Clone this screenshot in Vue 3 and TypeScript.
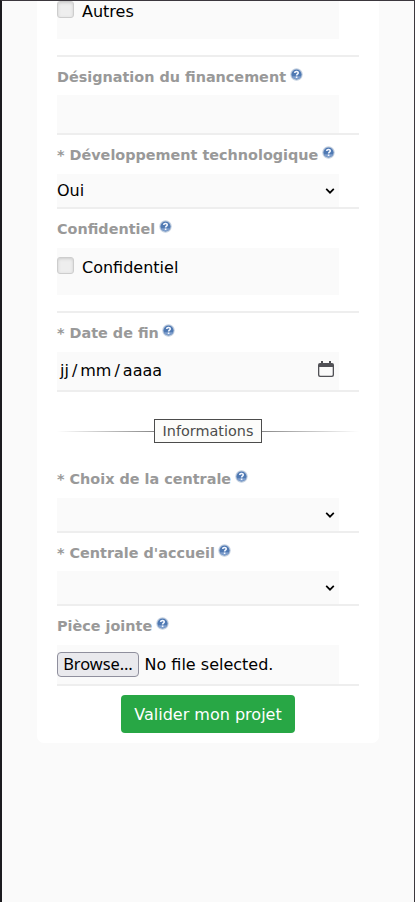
<script setup lang="ts">
interface Field {
  label: string
  kind: 'text' | 'select' | 'check' | 'date' | 'file'
  value?: string
  short?: boolean
}

const projectFields: Field[] = [
  { label: 'Désignation du financement', kind: 'text', short: true },
  { label: '* Développement technologique', kind: 'select', value: 'Oui' },
  { label: 'Confidentiel', kind: 'check', value: 'Confidentiel' },
  { label: '* Date de fin', kind: 'date' },
]

const infoFields: Field[] = [
  { label: '* Choix de la centrale', kind: 'select' },
  { label: "* Centrale d'accueil", kind: 'select', short: true },
  { label: 'Pièce jointe', kind: 'file' },
]

const groups = [
  { id: 'project', fields: projectFields },
  { id: 'info', title: 'Informations', fields: infoFields },
]
</script>

<template>
  <main class="page">
    <form class="card" @submit.prevent>
      <div class="control check first">
        <span class="box"></span><span>Autres</span>
      </div>
      <template v-for="group in groups" :key="group.id">
        <div v-if="group.title" class="separator">
          <i class="rule left"></i>
          <span class="title">{{ group.title }}</span>
          <i class="rule right"></i>
        </div>
        <section v-for="field in group.fields" :key="field.label" class="field" :class="field.kind">
          <label class="label" :class="{ short: field.short }">
            <span>{{ field.label }}</span>
            <svg class="help" width="13" height="13" viewBox="0 0 13 13">
              <circle cx="6.5" cy="6.5" r="6.2" fill="#c3cfdf" />
              <circle cx="6.5" cy="6.5" r="5.1" fill="#4f79b3" />
              <path d="M2 8.200a4.900 4.900 0 0 0 9 0Z" fill="#7f9fcd" />
              <path d="M4.700 5C4.800 3 8.400 3.100 8.200 5.100C8 6.300 6.600 6.200 6.600 7.600M6.600 8.500V10" fill="none" stroke="#f4f8ff" stroke-width="1.600" />
            </svg>
          </label>
          <div class="control" :class="field.kind">
            <template v-if="field.kind === 'check'">
              <span class="box"></span><span>{{ field.value }}</span>
            </template>
            <template v-else-if="field.kind === 'select'">
              <span>{{ field.value }}</span>
              <svg class="chevron" width="10" height="8" viewBox="0 0 10 8">
                <path d="M1.200 1.900 5 5.700 8.800 1.900" fill="none" stroke="#000" stroke-width="1.700" />
              </svg>
            </template>
            <template v-else-if="field.kind === 'date'">
              <span class="date-parts"><span>jj</span><span>/</span><span>mm</span><span>/</span><span>aaaa</span></span>
              <svg class="calendar" width="16" height="16" viewBox="0 0 16 16">
                <path d="M2 2h12a2 2 0 0 1 2 2v10a2 2 0 0 1-2 2H2a2 2 0 0 1-2-2V4a2 2 0 0 1 2-2ZM1.300 6v7.500a1.200 1.200 0 0 0 1.200 1.200h11a1.200 1.200 0 0 0 1.200-1.200V6Z" fill="#515156" fill-rule="evenodd" />
                <path d="M3 0h2v3H3zM11 0h2v3h-2z" fill="#515156" />
              </svg>
            </template>
            <template v-else-if="field.kind === 'file'">
              <button type="button" class="browse">Browse…</button>
              <span>No file selected.</span>
            </template>
          </div>
        </section>
      </template>
      <button type="submit" class="submit">Valider mon projet</button>
    </form>
  </main>
</template>

<style>
body {
  background: #fafafa;
}
</style>

<style scoped>
.page {
  box-sizing: border-box;
  height: 902px;
  padding: 0 35px;
  border: solid #3b373d;
  border-width: 1px 1px 0 2px;
  border-left-color: #1c1b1f;
  background: #fafafa;
  font: 16px/24px "DejaVu Sans", sans-serif;
  color: #000;
  overflow: hidden;
}
.card {
  box-sizing: border-box;
  width: 342px;
  height: 742px;
  padding: 0 20px;
  background: #fff;
  border-radius: 0 0 7px 7px;
  display: flex;
  flex-direction: column;
}
.field {
  border-bottom: 2px solid #eee;
}
.label {
  box-sizing: border-box;
  height: 39px;
  padding-top: 8px;
  display: flex;
  align-items: flex-start;
  gap: 3.5px;
  color: #999;
  font-size: 14.4px;
  font-weight: bold;
  line-height: 24px;
  white-space: nowrap;
}
.label.short {
  height: 38px;
}
.help {
  margin-top: 3px;
}
.control {
  box-sizing: border-box;
  width: 282px;
  height: 38px;
  background: #fafafa;
  display: flex;
  align-items: center;
  white-space: nowrap;
}
.control.select {
  height: 33px;
  justify-content: space-between;
  padding-right: 4px;
}
.control.check {
  height: 47px;
  align-items: flex-start;
  padding-top: 8px;
  gap: 8px;
}
.field.check {
  padding-bottom: 16px;
}
.control.check.first {
  width: 302px;
  height: 56px;
  padding-top: 0;
  flex: none;
  border-bottom: 2px solid #eee;
  background: linear-gradient(#fafafa, #fafafa) 0 0 / 282px 38px no-repeat;
}
.first > span:last-child {
  margin-top: -1px;
}
.box {
  box-sizing: border-box;
  width: 17px;
  height: 17px;
  margin-top: 1px;
  border: 1px solid #cdcdcd;
  border-radius: 3px;
  background: #eee;
  box-shadow: inset 0 1px 3px #ccc;
}
.first .box {
  margin-top: 0;
}
.control.date {
  justify-content: space-between;
  padding: 0 5px 0 3px;
}
.date-parts {
  display: flex;
  gap: 3px;
}
.calendar {
  margin-bottom: 4px;
}
.control.file {
  height: 39px;
  gap: 5.5px;
}
.browse {
  box-sizing: border-box;
  width: 82px;
  height: 25px;
  padding: 0;
  border: 1px solid #8f8f9d;
  border-radius: 4px;
  background: #e9e9ed;
  font: 16.4px/21px "Noto Sans", sans-serif;
  padding-bottom: 2px;
  color: #000;
}
.separator {
  box-sizing: border-box;
  height: 67px;
  display: flex;
  align-items: center;
  padding-top: 11px;
}
.rule {
  flex: 1;
  height: 1px;
}
.left {
  background: linear-gradient(to right, transparent, #888);
}
.right {
  background: linear-gradient(to left, transparent, #888);
}
.title {
  box-sizing: border-box;
  width: 108px;
  height: 24px;
  border: 1px solid #4c4c4c;
  background: #fcfcfa;
  color: #4c4c4c;
  font-size: 14.4px;
  line-height: 22px;
  text-align: center;
}
.submit {
  width: 174px;
  height: 38px;
  margin: 9px auto 0;
  padding: 2px 0 0;
  flex: none;
  border: 0;
  border-radius: 4px;
  background: #28a745;
  color: #fff;
  font: 16px/24px "DejaVu Sans", sans-serif;
}
</style>
